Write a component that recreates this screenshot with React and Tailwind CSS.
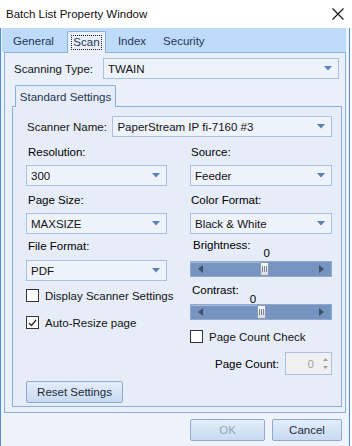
import React from "react";

const font = { fontFamily: '"Liberation Sans", Arial, sans-serif' };

function Arrow() {
  return (
    <svg width="8" height="5" viewBox="0 0 8 5" className="shrink-0">
      <path d="M0 0 H8 L4 4.5 Z" fill="#5b7fb1" />
    </svg>
  );
}

function Select({ text, className = "" }) {
  return (
    <div className={`h-[21px] border border-[#a8c0e2] bg-[#edf2fb] flex items-center justify-between pl-[4px] pr-[6px] text-[#141414] ${className}`}>
      <span className="text-[11.5px]">{text}</span>
      <Arrow />
    </div>
  );
}

function Checkbox({ checked, label, className = "" }) {
  return (
    <div className={`flex items-center h-[13px] whitespace-nowrap ${className}`}>
      <div className="w-[13px] h-[13px] shrink-0 border border-[#333] bg-white flex items-center justify-center">
        {checked && (
          <svg width="9" height="8" viewBox="0 0 9 8">
            <path d="M1 4 L3.5 6.5 L8 1" stroke="#222" strokeWidth="1.2" fill="none" />
          </svg>
        )}
      </div>
      <span className="ml-[6px] text-[#141414] text-[11.5px]">{label}</span>
    </div>
  );
}

function Slider({ thumb }) {
  return (
    <div className="relative h-[16px] bg-[#7694bf] border border-[#8eaad2]">
      <div className="absolute left-0 top-0 h-px bg-[#a9bddb]" style={{ width: thumb }} />
      <svg width="5" height="8" viewBox="0 0 5 8" className="absolute left-[7px] top-[3px]">
        <path d="M5 0 V8 L0 4 Z" fill="#40506a" />
      </svg>
      <svg width="5" height="8" viewBox="0 0 5 8" className="absolute right-[7px] top-[3px]">
        <path d="M0 0 V8 L5 4 Z" fill="#40506a" />
      </svg>
      <div
        className="absolute top-0 w-[9px] h-[14px] bg-gradient-to-b from-[#f4f6f9] to-[#d6dbe2] border border-[#8c9ab0] rounded-[1px] flex items-center justify-center gap-px"
        style={{ left: thumb }}
      >
        <div className="w-px h-[6px] bg-[#7d8796]" />
        <div className="w-px h-[6px] bg-[#7d8796]" />
        <div className="w-px h-[6px] bg-[#7d8796]" />
      </div>
    </div>
  );
}

function Button({ children, disabled, className = "" }) {
  return (
    <div
      className={`h-[22px] border border-[#8fa9cf] rounded-[2px] bg-gradient-to-b from-[#e4edf9] to-[#c8daf1] flex items-center justify-center text-[11.5px] ${disabled ? "text-[#95a3b8]" : "text-[#1d2a3c]"} ${className}`}
    >
      {children}
    </div>
  );
}

export default function App() {
  return (
    <div className="w-[352px] h-[446px] bg-white flex flex-col text-[11.5px] leading-[14px] overflow-hidden" style={font}>
      {/* Title bar */}
      <div className="h-[28px] flex items-center justify-between pl-[6px] pr-[8px] shrink-0">
        <span className="text-[11.5px] text-[#111]">Batch List Property Window</span>
        <svg width="12" height="12" viewBox="0 0 12 12">
          <path d="M0.5 0.5 L11.5 11.5 M11.5 0.5 L0.5 11.5" stroke="#111" strokeWidth="1.1" />
        </svg>
      </div>

      {/* Body */}
      <div className="w-[350px] flex-1 bg-[#edf2fb] border-x border-[#4f8ddb] flex flex-col">
        {/* Tab strip */}
        <div className="ml-px mr-[3px] h-[24px] bg-[#bfdbfc] flex items-end text-[#1f3656] shrink-0">
          <div className="ml-[11px] mb-[4px]">General</div>
          <div className="ml-[13px] w-[39px] h-[22px] -mb-px bg-[#e9f0fa] border border-b-0 border-[#8eaedb] rounded-t-[2px] flex items-center justify-center z-10">
            <span className="border border-dotted border-[#222] px-px leading-[13px]">Scan</span>
          </div>
          <div className="ml-[12px] mb-[4px]">Index</div>
          <div className="ml-[17px] mb-[4px]">Security</div>
        </div>

        {/* Panel */}
        <div className="ml-[3px] mr-[3px] h-[361px] bg-[#e9f0fa] border border-[#8eaedb] flex flex-col shrink-0">
          <div className="mt-[5px] flex items-center">
            <span className="ml-[9px] w-[89px] text-[#141414]">Scanning Type:</span>
            <Select text="TWAIN" className="w-[236px]" />
          </div>

          {/* Standard Settings tab */}
          <div className="mt-[6px] ml-[10px] w-[101px] h-[22px] -mb-px bg-[#e6edf8] border border-b-0 border-[#8eaedb] rounded-t-[2px] flex items-center justify-center text-[#1f3656] z-10">
            Standard Settings
          </div>

          {/* Group box */}
          <div className="ml-[7px] w-[330px] h-[301px] bg-[#e6edf8] border border-[#8eaedb] flex flex-col pl-[13px] pr-[9px]">
            <div className="mt-[9px] flex items-center">
              <span className="ml-px w-[86px] text-[#141414]">Scanner Name:</span>
              <Select text="PaperStream IP fi-7160 #3" className="w-[221px]" />
            </div>

            <div className="mt-[8px] flex gap-[23px]">
              {/* Left column */}
              <div className="w-[141px] flex flex-col">
                <div className="ml-[2px] h-[14px]">Resolution:</div>
                <Select text="300" className="mt-[6px]" />
                <div className="ml-[2px] mt-[7px] h-[14px]">Page Size:</div>
                <Select text="MAXSIZE" className="mt-[6px]" />
                <div className="ml-[2px] mt-[5px] h-[14px]">File Format:</div>
                <Select text="PDF" className="mt-[7px]" />
                <Checkbox label="Display Scanner Settings" className="mt-[8px]" />
                <Checkbox checked label="Auto-Resize page" className="mt-[14px]" />
              </div>

              {/* Right column */}
              <div className="w-[142px] flex flex-col">
                <div className="ml-px h-[14px]">Source:</div>
                <Select text="Feeder" className="mt-[6px]" />
                <div className="ml-px mt-[7px] h-[14px]">Color Format:</div>
                <Select text="Black & White" className="mt-[6px]" />
                <div className="mt-[4px] h-[23px] flex items-start">
                  <span className="ml-[3px]">Brightness:</span>
                  <span className="ml-[13px] mt-[8px]">0</span>
                </div>
                <Slider thumb={69} />
                <div className="mt-[6px] h-[21px] flex items-start">
                  <span className="ml-[2px]">Contrast:</span>
                  <span className="ml-[11px] mt-[9px]">0</span>
                </div>
                <Slider thumb={66} />
                <Checkbox label="Page Count Check" className="mt-[10px]" />
                <div className="mt-[9px] flex items-center">
                  <span className="ml-[25px] w-[70px]">Page Count:</span>
                  <div className="w-[47px] h-[23px] bg-[#f0f0f0] border border-[#a8c0e2] flex items-center justify-end pr-[3px] gap-[9px]">
                    <span className="text-[#a3a3a3]">0</span>
                    <div className="flex flex-col gap-[5px]">
                      <svg width="5" height="3" viewBox="0 0 5 3"><path d="M0 3 L2.5 0 L5 3 Z" fill="#a0a0a0" /></svg>
                      <svg width="5" height="3" viewBox="0 0 5 3"><path d="M0 0 L2.5 3 L5 0 Z" fill="#a0a0a0" /></svg>
                    </div>
                  </div>
                </div>
              </div>
            </div>

            <Button className="mt-[6px] w-[97px]">Reset Settings</Button>
          </div>
        </div>

        {/* Bottom buttons */}
        <div className="mt-[6px] flex">
          <Button disabled className="ml-[189px] w-[75px]">OK</Button>
          <Button className="ml-[7px] w-[70px]">Cancel</Button>
        </div>
      </div>
    </div>
  );
}
